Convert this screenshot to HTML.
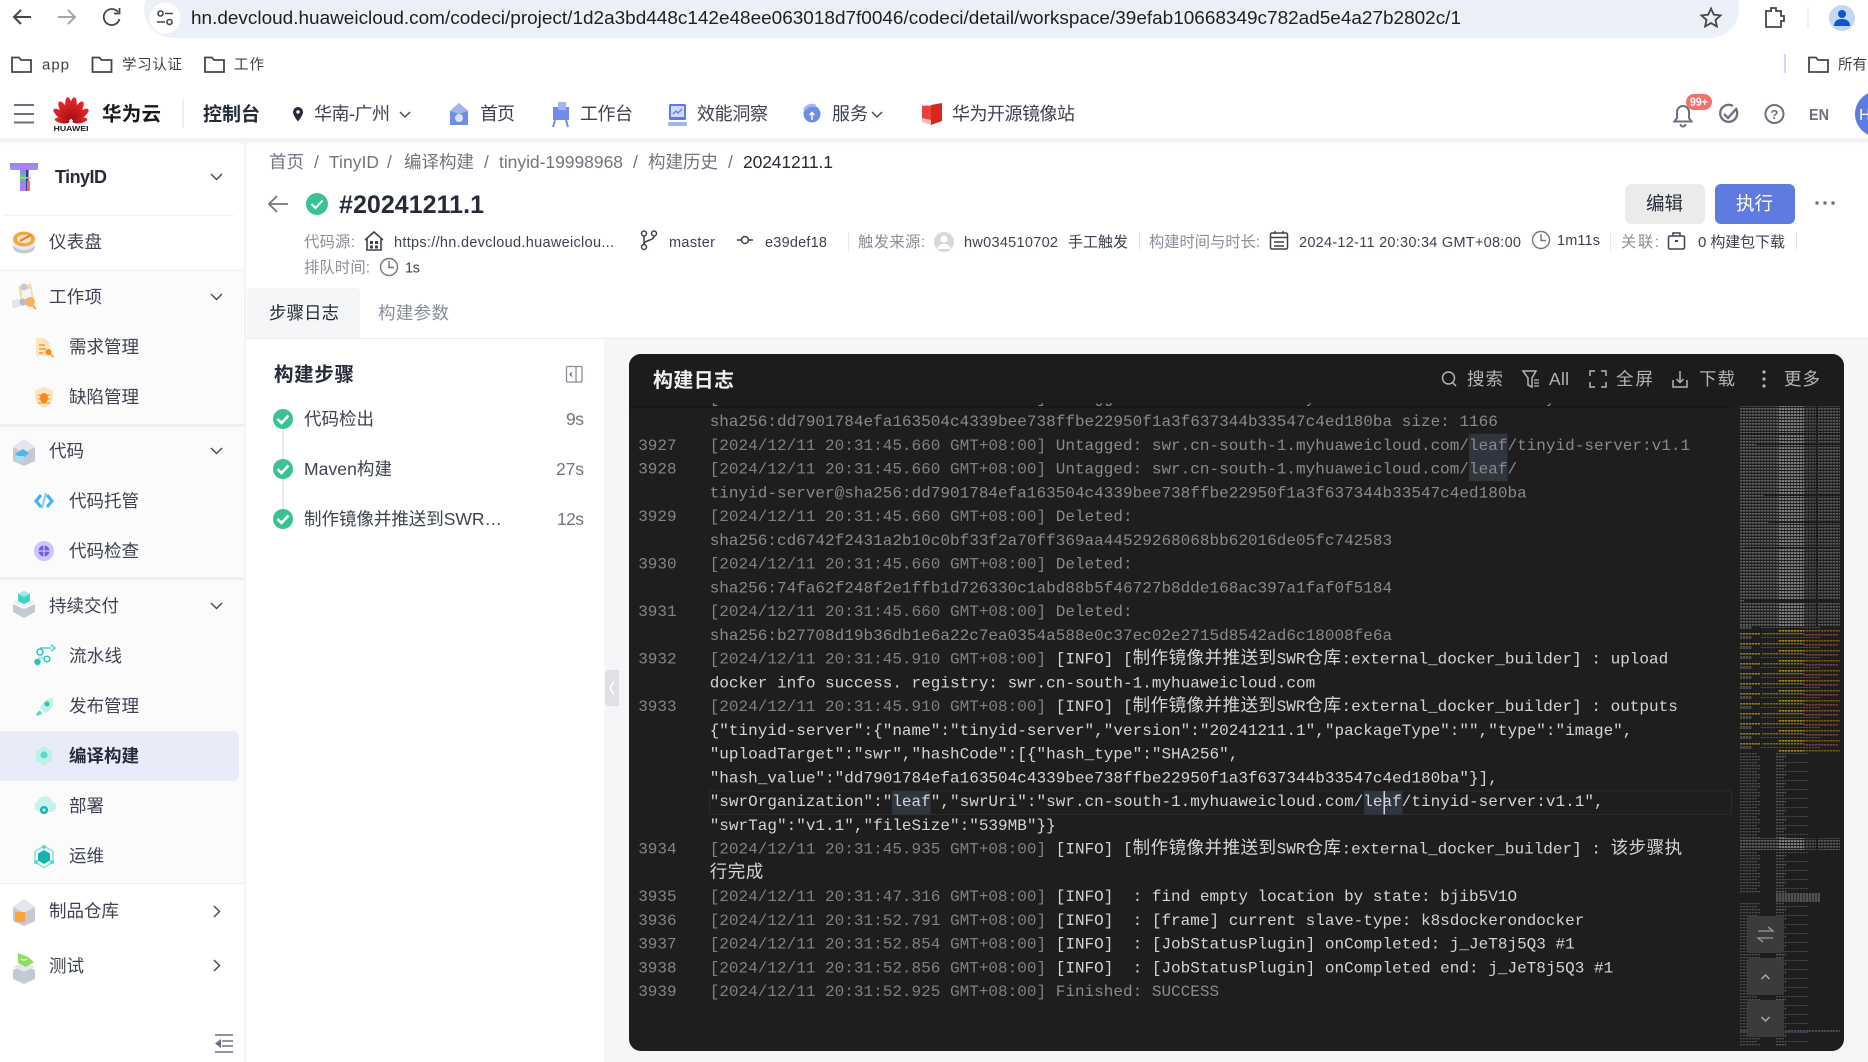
<!DOCTYPE html>
<html lang="zh"><head><meta charset="utf-8"><title>华为云 构建日志</title>
<style>
html,body{margin:0;padding:0;background:#fff;width:1868px;height:1062px;overflow:hidden}
svg{display:block}
text{font-family:"Liberation Sans","Noto Sans CJK SC",sans-serif;white-space:pre;fill:#3d4252;font-size:17.5px}
.k{fill:#252b3a}.g{fill:#8a8e99}.b{font-weight:700;fill:#252b3a}
.bc{fill:#71757f;font-size:17.5px}
.m{font-size:14.5px;fill:#3d4252}.mc{font-size:15px;fill:#3d4252}.mg{font-size:15.3px;fill:#8a8e99}
.h{fill:#b4b4b4;font-size:17.5px}
.l text,.l{font-family:"Liberation Mono","Noto Sans CJK SC",monospace;font-size:16px;letter-spacing:.01px}
.l text{fill:#8a8a8a}
.l .n{fill:#858585}.l .w{fill:#d4d4d4}.l .d{fill:#808080}
.c{font-family:"Noto Sans CJK SC",sans-serif;font-size:17.5px;letter-spacing:.5px}
.i{fill:none;stroke:#5b606e;stroke-width:1.6}
.ch{fill:none;stroke:#4a4f5e;stroke-width:1.5}
</style></head><body>
<svg width="1868" height="1062" viewBox="0 0 1868 1062" xmlns="http://www.w3.org/2000/svg">
<defs>
<linearGradient id="red" x1="0" y1="0" x2="0" y2="1"><stop offset="0" stop-color="#ec2a2e"/><stop offset="1" stop-color="#a50f12"/></linearGradient>
<linearGradient id="sh" x1="0" y1="0" x2="0" y2="1"><stop offset="0" stop-color="#eff0f3"/><stop offset="1" stop-color="#fff"/></linearGradient>
<linearGradient id="hs" x1="0" y1="0" x2="0" y2="1"><stop offset="0" stop-color="#141414"/><stop offset="1" stop-color="#1e1e1e"/></linearGradient>
<pattern id="mm1" width="100" height="3" patternUnits="userSpaceOnUse"><rect width="38" height="1.6" fill="#606060"/><rect x="38" width="26" height="2" fill="#7c7c7c"/><rect x="64" width="12" height="1.6" fill="#505050"/><rect x="78" width="22" height="1.6" fill="#5a5a5a"/></pattern>
<pattern id="mm2" width="100" height="10" patternUnits="userSpaceOnUse"><rect x="38" y="0" width="26" height="1.6" fill="#a8860f"/><rect x="64" y="0" width="36" height="1.5" fill="#6f5c12"/><rect x="0" y="3" width="20" height="1.6" fill="#9a7c10"/><rect x="22" y="3" width="42" height="1.5" fill="#7a6810"/><rect x="64" y="4" width="34" height="1.6" fill="#7d3c3c"/><rect x="0" y="6" width="12" height="3" fill="#4c4c4c"/><rect x="20" y="7" width="60" height="1" fill="#4a4a4a"/></pattern>
<pattern id="mm3" width="100" height="9" patternUnits="userSpaceOnUse"><rect width="20" height="1.300" fill="#4c4c4c"/><rect y="3" width="20" height="1.300" fill="#484848"/><rect y="6" width="18" height="1.300" fill="#484848"/><rect x="36" width="10" height="1.300" fill="#5c5c5c"/><rect x="36" y="3" width="8" height="1.300" fill="#4c4c4c"/><rect x="46" y="6" width="22" height="1" fill="#424242"/><rect x="36" y="6" width="10" height="1.300" fill="#4a4a4a"/></pattern>
<pattern id="mmd" width="3" height="3" patternUnits="userSpaceOnUse"><rect x="2" width="1" height="3" fill="#1e1e1e" fill-opacity=".65"/></pattern>
<clipPath id="cl"><rect x="629" y="404" width="1100" height="640"/></clipPath>
</defs>

<!-- browser chrome -->
<rect width="1868" height="138" fill="#fff"/>
<rect x="144" y="-20" width="1595" height="58" rx="29" fill="#ebf0f9"/>
<path d="M31 17H14M21 10l-7 7 7 7" fill="none" stroke="#444746" stroke-width="2"/>
<path d="M58 17h17M68 10l7 7-7 7" fill="none" stroke="#a5a7a9" stroke-width="2"/>
<path d="M118 12a8 8 0 1 0 1.500 7" fill="none" stroke="#444746" stroke-width="1.800"/><path d="M119.500 8v5.500h-5.500" fill="none" stroke="#444746" stroke-width="1.800"/>
<circle cx="165" cy="18" r="15.5" fill="#fff"/>
<circle cx="160.500" cy="13.500" r="2.500" fill="none" stroke="#444746" stroke-width="1.600"/><path d="M165 13.500h8M157 22h8" stroke="#444746" stroke-width="1.600"/><circle cx="169.500" cy="22" r="2.500" fill="none" stroke="#444746" stroke-width="1.600"/>
<text x="191" y="24" textLength="1270" lengthAdjust="spacingAndGlyphs" style="font-size:18.5px;fill:#1f1f1f">hn.devcloud.huaweicloud.com/codeci/project/1d2a3bd448c142e48ee063018d7f0046/codeci/detail/workspace/39efab10668349c782ad5e4a27b2802c/1</text>
<path d="M1711 8.500l2.800 6.200 6.700.7-5 4.500 1.400 6.600-5.900-3.400-5.900 3.400 1.400-6.600-5-4.500 6.700-.7z" fill="none" stroke="#444746" stroke-width="1.800"/>
<path d="M1766 11h5v-3h5v3h5v5h3v5h-3v6h-15z" fill="none" stroke="#444746" stroke-width="1.800"/>
<rect x="1807.500" y="7" width="1" height="21" fill="#d4dff2"/>
<circle cx="1842" cy="18" r="13" fill="#c2d7f6"/><circle cx="1842" cy="14" r="4" fill="#0b57d0"/><path d="M1834 26c0-5 3.500-7 8-7s8 2 8 7z" fill="#0b57d0"/>

<!-- bookmarks -->
<g fill="none" stroke="#444746" stroke-width="1.800" transform="translate(0 .5)"><path d="M12 57h7l2 2.500h10v12H12z"/><path d="M92.500 57h7l2 2.500h10v12h-19z"/><path d="M205 57h7l2 2.500h10v12h-19z"/><path d="M1809 57h7l2 2.500h10v12h-19z"/></g>
<text x="42" y="69.500" textLength="27" style="font-size:15px;fill:#3c4043">app</text>
<text x="122" y="69.500" textLength="60" style="font-size:14.500px;fill:#3c4043">学习认证</text>
<text x="234" y="69.500" textLength="30" style="font-size:14.500px;fill:#3c4043">工作</text>
<text x="1838" y="69.500" style="font-size:14.500px;fill:#3c4043">所有</text>
<rect x="1784" y="54" width="2" height="19" fill="#c9daf6"/>

<!-- top nav -->
<rect y="138" width="1868" height="2" fill="#f1f2f4"/>
<path d="M14 105h20M14 114h20M14 122.500h20" stroke="#6b7080" stroke-width="2"/>
<g fill="url(#red)">
<ellipse cx="71" cy="108" rx="3.600" ry="11" transform="rotate(-8 71 122)"/><ellipse cx="71" cy="108" rx="3.600" ry="11" transform="rotate(8 71 122)"/>
<ellipse cx="71" cy="109" rx="3.800" ry="10.500" transform="rotate(-30 71 122)"/><ellipse cx="71" cy="109" rx="3.800" ry="10.500" transform="rotate(30 71 122)"/>
<ellipse cx="71" cy="110" rx="3.600" ry="9.500" transform="rotate(-54 71 122)"/><ellipse cx="71" cy="110" rx="3.600" ry="9.500" transform="rotate(54 71 122)"/>
<ellipse cx="71" cy="113" rx="2.800" ry="7.500" transform="rotate(-80 71 122)"/><ellipse cx="71" cy="113" rx="2.800" ry="7.500" transform="rotate(80 71 122)"/>
</g>
<text x="53.500" y="131" textLength="35" lengthAdjust="spacingAndGlyphs" style="font-size:7.500px;font-weight:700;fill:#222">HUAWEI</text>
<text x="102" y="120.500" textLength="59" style="font-size:19.500px;font-weight:700;fill:#191919">华为云</text>
<rect x="182.500" y="99" width="1" height="29" fill="#dfe1e6"/>
<text x="203" y="120.500" textLength="57" style="font-size:19px;font-weight:700;fill:#252b3a">控制台</text>
<path d="M298 107a5 5 0 0 1 5 5c0 3.500-5 9.500-5 9.500s-5-6-5-9.500a5 5 0 0 1 5-5z" fill="#252b3a"/><circle cx="298" cy="112" r="1.700" fill="#fff"/>
<text x="314" y="120" textLength="76" style="fill:#3d4252;font-size:18px">华南-广州</text>
<path d="M400 112l5 5 5-5" class="ch"/>
<path d="M459 103l9 8v14h-18v-14z" fill="#6f8ce6"/><path d="M459 103l9 8-9 3-9-3z" fill="#a3b5ee"/><circle cx="459" cy="118" r="4" fill="#dce4fb"/>
<text x="480" y="120" textLength="35" style="font-size:18px">首页</text>
<path d="M553 107h16v13h-16z" fill="#6f8ce6"/><rect x="558" y="102" width="8" height="8" fill="#a3b5ee"/><path d="M555 120l-2 7M566 120l2 7" stroke="#6f8ce6" stroke-width="2"/>
<text x="580" y="120" textLength="53" style="font-size:18px">工作台</text>
<rect x="669" y="104" width="17" height="16" rx="1.500" fill="#5e7ce0"/><rect x="671" y="106" width="13" height="11" fill="#cfd9fa"/><path d="M673 114l3-3 2 2 4-4" fill="none" stroke="#5e7ce0" stroke-width="1.300"/><rect x="668" y="122" width="19" height="4" rx="1" fill="#a3b5ee"/>
<text x="697" y="120" textLength="71" style="font-size:18px">效能洞察</text>
<circle cx="812" cy="114" r="8.500" fill="#6f8ce6"/><path d="M804.500 110a8.500 8.500 0 0 1 11-4" stroke="#a3b5ee" stroke-width="3" fill="none"/><path d="M812 120v-7M809.500 115l2.500-2.500 2.500 2.500" stroke="#fff" fill="none" stroke-width="1.500"/>
<text x="832" y="120" textLength="36" style="font-size:18px">服务</text>
<path d="M872 112l5 5 5-5" class="ch"/>
<path d="M922 105h9v20l-9-3z" fill="#f9b8b4"/><path d="M931 105l11-2v18l-11 4z" fill="#d7281f"/><path d="M922 106h9v14l-9-2z" fill="#e9423a"/>
<text x="952" y="120" textLength="123" style="font-size:18px">华为开源镜像站</text>
<path d="M1683 106a6 6 0 0 1 6 6v6l2.500 3.500h-17l2.500-3.500v-6a6 6 0 0 1 6-6zM1680.500 124a2.500 2.500 0 0 0 5 0" fill="none" stroke="#6b7080" stroke-width="2"/>
<rect x="1686" y="94" width="26" height="16" rx="8" fill="#f66f6a"/><text x="1690" y="106" textLength="18" lengthAdjust="spacingAndGlyphs" style="font-size:11.500px;font-weight:700;fill:#fff">99+</text>
<path d="M1736 109a8.500 8.500 0 1 1-3-3" fill="none" stroke="#6b7080" stroke-width="2.300"/><path d="M1724 114l4 4 9-10" fill="none" stroke="#6b7080" stroke-width="2.300"/>
<circle cx="1774.500" cy="114" r="9" fill="none" stroke="#6b7080" stroke-width="2"/><text x="1770.500" y="119" style="font-size:13px;font-weight:700;fill:#6b7080">?</text>
<text x="1809" y="120" textLength="20" lengthAdjust="spacingAndGlyphs" style="font-size:15.500px;font-weight:700;fill:#6b7080">EN</text>
<circle cx="1878" cy="114" r="23" fill="#5e7ce0"/><text x="1859" y="120" style="font-size:16px;fill:#fff">H</text>

<!-- main backgrounds -->
<rect x="246" y="140" width="1622" height="198" fill="#fff"/>
<rect x="0" y="140" width="1868" height="5" fill="url(#sh)"/>
<rect x="604" y="338" width="1264" height="724" fill="#f5f6f8"/>
<rect x="246" y="338" width="1622" height="1" fill="#eaecf0"/>

<!-- sidebar -->
<rect x="244" y="140" width="2" height="922" fill="#f2f3f6"/>
<rect y="270" width="244" height="155" fill="#fbfbfc"/>
<rect y="427" width="244" height="152" fill="#fbfbfc"/>
<rect y="580" width="244" height="303" fill="#fbfbfc"/>
<rect x="4" y="215" width="230" height="1" fill="#eef0f5"/>
<rect y="270" width="244" height="1" fill="#eef0f5"/>
<rect y="424" width="244" height="3" fill="#eef0f5"/>
<rect y="577" width="244" height="3" fill="#eef0f5"/>
<rect y="883" width="244" height="1" fill="#e9ebf0"/>
<path d="M0 731h233a6 6 0 0 1 6 6v38a6 6 0 0 1-6 6H0z" fill="#e8ecf8"/>

<!-- T logo -->
<rect x="10" y="163" width="28" height="4" fill="#a97ff0"/><rect x="10" y="167" width="28" height="3" fill="#6fa8f5"/><rect x="20" y="163" width="9" height="28" fill="#a97ff0"/><rect x="20" y="174" width="7" height="7" fill="#4cc7a0"/><rect x="26" y="170" width="2" height="21" fill="#2d3f8c"/><rect x="27" y="181" width="3" height="10" fill="#ef6f6f"/><rect x="20" y="177" width="11" height="1.500" fill="#f6b64a"/>
<text x="55" y="183" textLength="52" style="font-size:18px;font-weight:700;fill:#252b3a">TinyID</text>
<path d="M211 174l5.500 5.500 5.500-5.500" class="ch"/>

<!-- dashboard -->
<ellipse cx="24" cy="247" rx="11" ry="6.500" fill="#c5c9d3"/><ellipse cx="24" cy="244" rx="11" ry="6" fill="#e8eaef"/><ellipse cx="24" cy="239" rx="11" ry="7.500" fill="#f7a53c"/><ellipse cx="24" cy="239" rx="7" ry="4.200" fill="#fce4c3"/><path d="M20 241l11-6" stroke="#e8821a" stroke-width="2"/>
<text x="49" y="248" textLength="53">仪表盘</text>
<!-- workitem -->
<rect x="20" y="285" width="13" height="19" fill="#fbd9a8" transform="rotate(-10 26 295)"/><rect x="22" y="289" width="9" height="13" fill="#f4f5f7"/><circle cx="24" cy="287" r="3.500" fill="#c5c9d3"/><rect x="12" y="299" width="11" height="8" fill="#e3e6ec" transform="rotate(-12 18 303)"/><circle cx="23" cy="302" r="3.500" fill="#b5bac6"/><circle cx="30" cy="302" r="5" fill="#f7b15f"/><path d="M33 306l3 3" stroke="#f7a53c" stroke-width="2"/>
<text x="49" y="303" textLength="53">工作项</text>
<path d="M211 294l5.500 5.500 5.500-5.500" class="ch"/>
<!-- req -->
<path d="M36 338h9l5 5v13H36z" fill="#fde5bf"/><path d="M39 345h6M39 349h7M39 353h4" stroke="#f68a1e" stroke-width="1.200"/><circle cx="48.500" cy="352" r="3" fill="#f68a1e"/><path d="M50.500 354l3 3" stroke="#f68a1e" stroke-width="1.500"/>
<text x="69" y="353" textLength="70">需求管理</text>
<!-- bug -->
<path d="M44 387l9 3v8c0 5-5 8-9 10-4-2-9-5-9-10v-8z" fill="#fde5bf"/><ellipse cx="44" cy="398" rx="4" ry="5" fill="#f68a1e"/><path d="M38 395l12 0M38 399h12M38 403h12" stroke="#f68a1e" stroke-width="1.100"/>
<text x="69" y="403" textLength="70">缺陷管理</text>
<!-- code -->
<path d="M24 439l11 8v14l-11 5-11-5v-14z" fill="#c5c9d3"/><path d="M24 439l11 8-11 6-11-6z" fill="#e3e6ec"/><path d="M15 454l8-5 6 4-7 6z" fill="#4fb6ee"/><rect x="16" y="456" width="8" height="6" fill="#a5dcf9"/>
<text x="49" y="457" textLength="35">代码</text>
<path d="M211 448l5.500 5.500 5.500-5.500" class="ch"/>
<!-- repo -->
<path d="M41 495l-5 6 5 6M47 495l5 6-5 6" fill="none" stroke="#3fb2ef" stroke-width="3"/><path d="M46 493l-4 15" stroke="#7fd0f6" stroke-width="2"/>
<text x="69" y="507" textLength="70">代码托管</text>
<!-- check -->
<circle cx="44" cy="551" r="10" fill="#cdc5fb"/><circle cx="44" cy="551" r="5.500" fill="#6a5fd6"/><path d="M44 541v20M34 551h20" stroke="#cdc5fb" stroke-width="1.200"/>
<text x="69" y="557" textLength="70">代码检查</text>
<!-- delivery -->
<path d="M13 602l11-5 11 5-11 5z" fill="#eceef2"/><path d="M13 604l11 5 11-5v8l-11 6-11-6z" fill="#c5c9d3"/><path d="M24 591l6 3v7l-6 3-6-3v-7z" fill="#3fd4c6"/><path d="M24 591l6 3-6 3-6-3z" fill="#9bece3"/>
<text x="49" y="612" textLength="70">持续交付</text>
<path d="M211 603l5.500 5.500 5.500-5.500" class="ch"/>
<!-- pipeline -->
<path d="M40 648h11M51 645l4 3-4 3" fill="none" stroke="#5dd8cc" stroke-width="1.800"/><circle cx="40" cy="652" r="3" fill="none" stroke="#2cc4b8" stroke-width="1.500"/><path d="M38 658h12" stroke="#a9eee7" stroke-width="3"/><circle cx="47" cy="659" r="2.800" fill="#fff" stroke="#2cc4b8" stroke-width="1.500"/><circle cx="37.500" cy="662" r="3.200" fill="#2cc4b8"/>
<text x="69" y="662" textLength="53">流水线</text>
<!-- rocket -->
<path d="M53 698c1 8-2 13-8 15l-5-5c2-6 7-10 13-10z" fill="#bff0ea"/><circle cx="47" cy="704" r="2.500" fill="#2cc4b8"/><path d="M40 710l-4 4 1 2 5-2z" fill="#5dd8cc"/>
<text x="69" y="712" textLength="70">发布管理</text>
<!-- build -->
<path d="M44 746l8 5v10l-8 5-8-5v-10z" fill="#bff0ea"/><circle cx="44" cy="755" r="3.500" fill="#5dd8cc"/>
<text x="69" y="762" textLength="70" style="font-weight:700;fill:#252b3a">编译构建</text>
<!-- deploy -->
<path d="M39 812a6 6 0 0 1-1-11 7.500 7.500 0 0 1 14 0 6 6 0 0 1 1 11z" fill="#c5f2ed"/><circle cx="44" cy="810" r="2.800" fill="#fff" stroke="#12b5ad" stroke-width="2.500"/>
<text x="69" y="812" textLength="35">部署</text>
<!-- ops -->
<path d="M44 850l6 3.500v7l-6 3.500-6-3.500v-7z" fill="#12b5ad"/><path d="M44 846l9 5.500v10.500l-9 5.500-9-5.500v-10.500z" fill="none" stroke="#7fe3da" stroke-width="1.400"/><circle cx="44" cy="847" r="2" fill="#5ad8cf"/><circle cx="36" cy="862" r="2" fill="#5ad8cf"/><circle cx="52" cy="862" r="2" fill="#5ad8cf"/>
<text x="69" y="862" textLength="35">运维</text>
<!-- artifact -->
<path d="M24 899l11 8v14l-11 5-11-5v-14z" fill="#c5c9d3"/><path d="M24 899l11 8-11 6-11-6z" fill="#e3e6ec"/><rect x="15" y="912" width="10" height="10" fill="#f7a53c"/>
<text x="49" y="917" textLength="70">制品仓库</text>
<path d="M214 906l5.500 5.500-5.500 5.500" class="ch"/>
<!-- test -->
<path d="M24 965l11 5v9l-11 5-11-5v-9z" fill="#c5c9d3"/><path d="M24 962l11 5-11 5-11-5z" fill="#e3e6ec"/><path d="M18 953l10 4 6 5-8 5-8-4z" fill="#8fdc5e"/><path d="M21 959q3 2 6 0" stroke="#fff" fill="none" stroke-width="1.200"/>
<text x="49" y="972" textLength="35">测试</text>
<path d="M214 960l5.500 5.500-5.500 5.500" class="ch"/>
<!-- collapse -->
<path d="M215 1035h18M222 1041h11M222 1046h11M215 1052h18" stroke="#6b7080" stroke-width="1.600"/><path d="M221 1039v9l-6-4.500z" fill="#6b7080"/>

<!-- breadcrumb -->
<text class="bc" x="269" y="167.800" textLength="35">首页</text><text class="bc" x="314" y="167.800">/</text>
<text class="bc" x="329" y="167.800" textLength="50">TinyID</text><text class="bc" x="387" y="167.800">/</text>
<text class="bc" x="404" y="167.800" textLength="70">编译构建</text><text class="bc" x="484" y="167.800">/</text>
<text class="bc" x="499" y="167.800" textLength="124">tinyid-19998968</text><text class="bc" x="633" y="167.800">/</text>
<text class="bc" x="648" y="167.800" textLength="70">构建历史</text><text class="bc" x="728" y="167.800">/</text>
<text x="743" y="167.800" textLength="90" style="fill:#252b3a">20241211.1</text>

<!-- title -->
<path d="M288 204h-18M277 196l-8 8 8 8" fill="none" stroke="#71757f" stroke-width="1.800"/>
<circle cx="317" cy="204" r="11" fill="#3ac295"/><path d="M311.500 204l4 4 7-7.500" fill="none" stroke="#fff" stroke-width="2"/>
<text x="339" y="213" textLength="145" style="font-size:25px;font-weight:700;fill:#252b3a">#20241211.1</text>
<rect x="1625" y="184" width="80" height="40" rx="6" fill="#ebebeb"/><text x="1646" y="210" textLength="37" style="font-size:18.500px;fill:#252b3a">编辑</text>
<rect x="1715" y="184" width="80" height="40" rx="6" fill="#5e7ce0"/><text x="1736" y="210" textLength="37" style="font-size:18.500px;fill:#fff">执行</text>
<g fill="#6b7080"><circle cx="1817" cy="203" r="1.700"/><circle cx="1825" cy="203" r="1.700"/><circle cx="1833" cy="203" r="1.700"/></g>

<!-- meta -->
<text class="mg" x="304" y="247" textLength="51">代码源:</text>
<path d="M365 240l9-8 9 8M367 238v12h14v-12" fill="none" stroke="#3d4252" stroke-width="1.600"/><rect x="370" y="241" width="3" height="3" fill="#3d4252"/><rect x="375" y="241" width="3" height="3" fill="#3d4252"/><rect x="370" y="245.500" width="3" height="3" fill="#3d4252"/><rect x="375" y="245.500" width="3" height="3" fill="#3d4252"/>
<text class="m" x="394" y="247" textLength="220">https://hn.devcloud.huaweiclou...</text>
<g fill="none" stroke="#3d4252" stroke-width="1.500"><circle cx="644" cy="233.500" r="2.500"/><circle cx="654" cy="233.500" r="2.500"/><circle cx="644" cy="247" r="2.500"/><path d="M644 236v8.500M654 236c0 5-10 4-10 8"/></g>
<text class="m" x="669" y="247" textLength="46">master</text>
<circle cx="745" cy="240" r="3.500" fill="none" stroke="#3d4252" stroke-width="1.500"/><path d="M737 240h4.500M748.500 240h4.500" stroke="#3d4252" stroke-width="1.500"/>
<text class="m" x="765" y="247" textLength="62">e39def18</text>
<rect x="848" y="232" width="1" height="19" fill="#e6e8ec"/>
<text class="mg" x="858" y="247" textLength="67">触发来源:</text>
<circle cx="944" cy="242" r="10" fill="#d5d8e0"/><circle cx="944" cy="239" r="3.500" fill="#fff"/><path d="M937 249c1-4 4-5 7-5s6 1 7 5z" fill="#fff"/>
<text class="m" x="964" y="247" textLength="94">hw034510702</text>
<text class="mc" x="1068" y="247" textLength="60">手工触发</text>
<rect x="1139" y="232" width="1" height="19" fill="#e6e8ec"/>
<text class="mg" x="1149" y="247" textLength="111">构建时间与时长:</text>
<rect x="1270.500" y="233" width="17" height="16" rx="1.500" fill="none" stroke="#3d4252" stroke-width="1.500"/><path d="M1270 237.500h18M1274 242h10M1274 246h10M1275 231v3M1283 231v3" stroke="#3d4252" stroke-width="1.400"/>
<text class="m" x="1299" y="247" textLength="222">2024-12-11 20:30:34 GMT+08:00</text>
<circle cx="1541" cy="240" r="8.500" fill="none" stroke="#71757f" stroke-width="1.400"/><path d="M1541 234v6.500h5" fill="none" stroke="#71757f" stroke-width="1.400"/>
<text class="m" x="1557" y="245" textLength="43">1m11s</text>
<rect x="1610" y="232" width="1" height="19" fill="#e6e8ec"/>
<text class="mg" x="1621" y="247" textLength="38">关联:</text>
<path d="M1673 236v-3h7v3" fill="none" stroke="#3d4252" stroke-width="1.500"/><rect x="1668.500" y="236" width="16" height="13" rx="1.500" fill="none" stroke="#3d4252" stroke-width="1.500"/><rect x="1675" y="240" width="3" height="2" fill="#3d4252"/>
<text class="mc" x="1698" y="247" textLength="87">0 构建包下载</text>
<rect x="1796" y="232" width="1" height="19" fill="#e6e8ec"/>
<text class="mg" x="304" y="272.500" textLength="66">排队时间:</text>
<circle cx="389" cy="267" r="8.500" fill="none" stroke="#71757f" stroke-width="1.400"/><path d="M389 261v6.500h5" fill="none" stroke="#71757f" stroke-width="1.400"/>
<text class="m" x="405" y="272.500" textLength="15">1s</text>

<!-- tabs -->
<path d="M247 338v-46a4 4 0 0 1 4-4h105a4 4 0 0 1 4 4v46z" fill="#f5f6f8"/>
<text x="269" y="319" textLength="70" style="fill:#252b3a">步骤日志</text>
<text class="g" x="378" y="319" textLength="71">构建参数</text>

<!-- steps -->
<text x="274" y="381" textLength="80" style="font-size:19.500px;font-weight:700;fill:#252b3a">构建步骤</text>
<rect x="566.500" y="366.500" width="15.500" height="15.500" rx="1" fill="none" stroke="#8a8e99" stroke-width="1.300"/><path d="M576 367v15" stroke="#8a8e99" stroke-width="1.300"/><path d="M572 372.500l-2 2 2 2" fill="none" stroke="#5b606e" stroke-width="1.200"/>
<rect x="282" y="429" width="2" height="30" fill="#e5e9f7"/><rect x="282" y="479" width="2" height="30" fill="#e5e9f7"/>
<g fill="#3ac295"><circle cx="283" cy="419" r="10"/><circle cx="283" cy="469" r="10"/><circle cx="283" cy="519" r="10"/></g>
<g fill="none" stroke="#fff" stroke-width="2.600"><path d="M277.500 419l4 4 7-7.500"/><path d="M277.500 469l4 4 7-7.500"/><path d="M277.500 519l4 4 7-7.500"/></g>
<text x="304" y="425" textLength="70">代码检出</text><text class="g" x="566" y="425" textLength="18" style="fill:#71757f">9s</text>
<text x="304" y="475" textLength="88">Maven构建</text><text class="g" x="556" y="475" textLength="28" style="fill:#71757f">27s</text>
<text x="304" y="525" textLength="198">制作镜像并推送到SWR…</text><text class="g" x="557" y="525" textLength="27" style="fill:#71757f">12s</text>

<!-- handle -->
<path d="M605 674a4 4 0 0 1 4-4h10v36h-10a4 4 0 0 1-4-4z" fill="#dfe1e6"/><path d="M614 681l-4 7 4 7" fill="none" stroke="#fff" stroke-width="1.500"/>

<!-- log panel -->
<rect x="629" y="354" width="1215" height="697" rx="12" fill="#1e1e1e"/>
<path d="M629 406v-40a12 12 0 0 1 12-12h1191a12 12 0 0 1 12 12v40z" fill="#1c1c1c"/>
<text x="653" y="387" textLength="81" style="font-size:20px;font-weight:700;fill:#efefef">构建日志</text>
<circle cx="1448.500" cy="378" r="6" fill="none" stroke="#b4b4b4" stroke-width="1.500"/><path d="M1453 383l3 3" stroke="#b4b4b4" stroke-width="1.500"/>
<text class="h" x="1467" y="385" textLength="36">搜索</text>
<path d="M1523 371h13l-4 7v9l-4-2v-7z" fill="none" stroke="#b4b4b4" stroke-width="1.500"/><path d="M1534 380h5M1534 383h5M1534 386h5" stroke="#b4b4b4" stroke-width="1.200"/>
<text class="h" x="1549" y="385" textLength="20">All</text>
<path d="M1590 376v-5h5M1601 371h5v5M1606 382v5h-5M1595 387h-5v-5" fill="none" stroke="#b4b4b4" stroke-width="1.500"/>
<text class="h" x="1616" y="385" textLength="37">全屏</text>
<path d="M1673 380v7h14v-7M1680 371v11M1676.500 379l3.500 3.500 3.500-3.500" fill="none" stroke="#b4b4b4" stroke-width="1.500"/>
<text class="h" x="1699" y="385" textLength="36">下载</text>
<g fill="#b4b4b4"><circle cx="1764" cy="372" r="1.600"/><circle cx="1764" cy="379" r="1.600"/><circle cx="1764" cy="386" r="1.600"/></g>
<text class="h" x="1784" y="385" textLength="36">更多</text>

<!-- highlights -->
<rect x="1469" y="433.700" width="38.500" height="47.500" fill="#30363f"/>
<rect x="709.500" y="791" width="1022" height="23.500" fill="none" stroke="#2a2a2a"/>
<rect x="892" y="791" width="38.500" height="23.500" fill="#30363f"/>
<rect x="1364" y="791" width="38.500" height="23.500" fill="#30363f"/>

<!-- log -->
<g class="l" transform="translate(-.3 -.8)">
<text x="710" y="403.250" clip-path="url(#cl)">[2024/12/11 20:31:45.660 GMT+08:00] Untagged: swr.cn-south-1.myhuaweicloud.com/leaf/tinyid-server:v1</text>
<text x="710" y="427">sha256:dd7901784efa163504c4339bee738ffbe22950f1a3f637344b33547c4ed180ba size: 1166</text>
<text class="n" x="638.500" y="450.750">3927</text><text x="710" y="450.750"><tspan class="d">[2024/12/11 20:31:45.660 GMT+08:00]</tspan> Untagged: swr.cn-south-1.myhuaweicloud.com/leaf/tinyid-server:v1.1</text>
<text class="n" x="638.500" y="474.500">3928</text><text x="710" y="474.500"><tspan class="d">[2024/12/11 20:31:45.660 GMT+08:00]</tspan> Untagged: swr.cn-south-1.myhuaweicloud.com/leaf/</text>
<text x="710" y="498.250">tinyid-server@sha256:dd7901784efa163504c4339bee738ffbe22950f1a3f637344b33547c4ed180ba</text>
<text class="n" x="638.500" y="522">3929</text><text x="710" y="522"><tspan class="d">[2024/12/11 20:31:45.660 GMT+08:00]</tspan> Deleted:</text>
<text x="710" y="545.750">sha256:cd6742f2431a2b10c0bf33f2a70ff369aa44529268068bb62016de05fc742583</text>
<text class="n" x="638.500" y="569.500">3930</text><text x="710" y="569.500"><tspan class="d">[2024/12/11 20:31:45.660 GMT+08:00]</tspan> Deleted:</text>
<text x="710" y="593.250">sha256:74fa62f248f2e1ffb1d726330c1abd88b5f46727b8dde168ac397a1faf0f5184</text>
<text class="n" x="638.500" y="617">3931</text><text x="710" y="617"><tspan class="d">[2024/12/11 20:31:45.660 GMT+08:00]</tspan> Deleted:</text>
<text x="710" y="640.750">sha256:b27708d19b36db1e6a22c7ea0354a588e0c37ec02e2715d8542ad6c18008fe6a</text>
<text class="n" x="638.500" y="664.500">3932</text><text x="710" y="664.500" class="w"><tspan class="d">[2024/12/11 20:31:45.910 GMT+08:00]</tspan> [INFO] [<tspan class="c">制作镜像并推送到</tspan>SWR<tspan class="c">仓库</tspan>:external_docker_builder] : upload</text>
<text class="w" x="710" y="688.250">docker info success. registry: swr.cn-south-1.myhuaweicloud.com</text>
<text class="n" x="638.500" y="712">3933</text><text x="710" y="712" class="w"><tspan class="d">[2024/12/11 20:31:45.910 GMT+08:00]</tspan> [INFO] [<tspan class="c">制作镜像并推送到</tspan>SWR<tspan class="c">仓库</tspan>:external_docker_builder] : outputs</text>
<text class="w" x="710" y="735.750">{"tinyid-server":{"name":"tinyid-server","version":"20241211.1","packageType":"","type":"image",</text>
<text class="w" x="710" y="759.500">"uploadTarget":"swr","hashCode":[{"hash_type":"SHA256",</text>
<text class="w" x="710" y="783.250">"hash_value":"dd7901784efa163504c4339bee738ffbe22950f1a3f637344b33547c4ed180ba"}],</text>
<text class="w" x="710" y="807">"swrOrganization":"leaf","swrUri":"swr.cn-south-1.myhuaweicloud.com/leaf/tinyid-server:v1.1",</text>
<text class="w" x="710" y="830.750">"swrTag":"v1.1","fileSize":"539MB"}}</text>
<text class="n" x="638.500" y="854.500">3934</text><text x="710" y="854.500" class="w"><tspan class="d">[2024/12/11 20:31:45.935 GMT+08:00]</tspan> [INFO] [<tspan class="c">制作镜像并推送到</tspan>SWR<tspan class="c">仓库</tspan>:external_docker_builder] : <tspan class="c">该步骤执</tspan></text>
<text class="w" x="710" y="878.250"><tspan class="c">行完成</tspan></text>
<text class="n" x="638.500" y="902">3935</text><text x="710" y="902" class="w"><tspan class="d">[2024/12/11 20:31:47.316 GMT+08:00]</tspan> [INFO]  : find empty location by state: bjib5V1O</text>
<text class="n" x="638.500" y="925.750">3936</text><text x="710" y="925.750" class="w"><tspan class="d">[2024/12/11 20:31:52.791 GMT+08:00]</tspan> [INFO]  : [frame] current slave-type: k8sdockerondocker</text>
<text class="n" x="638.500" y="949.500">3937</text><text x="710" y="949.500" class="w"><tspan class="d">[2024/12/11 20:31:52.854 GMT+08:00]</tspan> [INFO]  : [JobStatusPlugin] onCompleted: j_JeT8j5Q3 #1</text>
<text class="n" x="638.500" y="973.250">3938</text><text x="710" y="973.250" class="w"><tspan class="d">[2024/12/11 20:31:52.856 GMT+08:00]</tspan> [INFO]  : [JobStatusPlugin] onCompleted end: j_JeT8j5Q3 #1</text>
<text class="n" x="638.500" y="997">3939</text><text x="710" y="997"><tspan class="d">[2024/12/11 20:31:52.925 GMT+08:00]</tspan> Finished: SUCCESS</text>
</g>
<rect x="1383.500" y="791" width="1.500" height="23.500" fill="#d4d4d4"/>
<rect x="629" y="406" width="1100" height="3" fill="url(#hs)"/>

<!-- minimap -->
<g transform="translate(1740 0)">
<rect y="406" width="100" height="220" fill="url(#mm1)"/>
<rect y="433" width="100" height="2" fill="#1e1e1e"/><rect x="16" y="443" width="84" height="2" fill="#1e1e1e"/><rect x="24" y="494" width="76" height="2" fill="#1e1e1e"/><rect x="28" y="521" width="72" height="2" fill="#1e1e1e"/><rect x="4" y="547" width="96" height="2" fill="#1e1e1e"/><rect x="4" y="600" width="96" height="2" fill="#1e1e1e"/>
<rect y="626" width="100" height="127" fill="url(#mm2)"/>
<rect y="753" width="100" height="85" fill="url(#mm3)"/>
<rect y="838" width="100" height="12" fill="url(#mm1)"/>
<rect y="850" width="100" height="43" fill="url(#mm3)"/>
<rect x="36" y="893" width="44" height="9" fill="#505050"/>
<rect y="902" width="100" height="145" fill="url(#mm3)"/>
<rect y="1030" width="100" height="2" fill="#3c4b5c"/>
<rect y="406" width="100" height="641" fill="url(#mmd)"/>
</g>

<!-- float buttons -->
<g fill="#3b3b3b"><rect x="1747" y="916" width="37" height="37" rx="3"/><rect x="1747" y="958" width="37" height="37" rx="3"/><rect x="1747" y="1000" width="37" height="37" rx="3"/></g>
<path d="M1758 931h15l-5-4M1773 938h-15l5 4" fill="none" stroke="#9a9a9a" stroke-width="1.300"/>
<path d="M1761.500 979l4-4 4 4" fill="none" stroke="#aaa" stroke-width="1.500"/>
<path d="M1761.500 1017l4 4 4-4" fill="none" stroke="#aaa" stroke-width="1.500"/>
</svg>
</body></html>
